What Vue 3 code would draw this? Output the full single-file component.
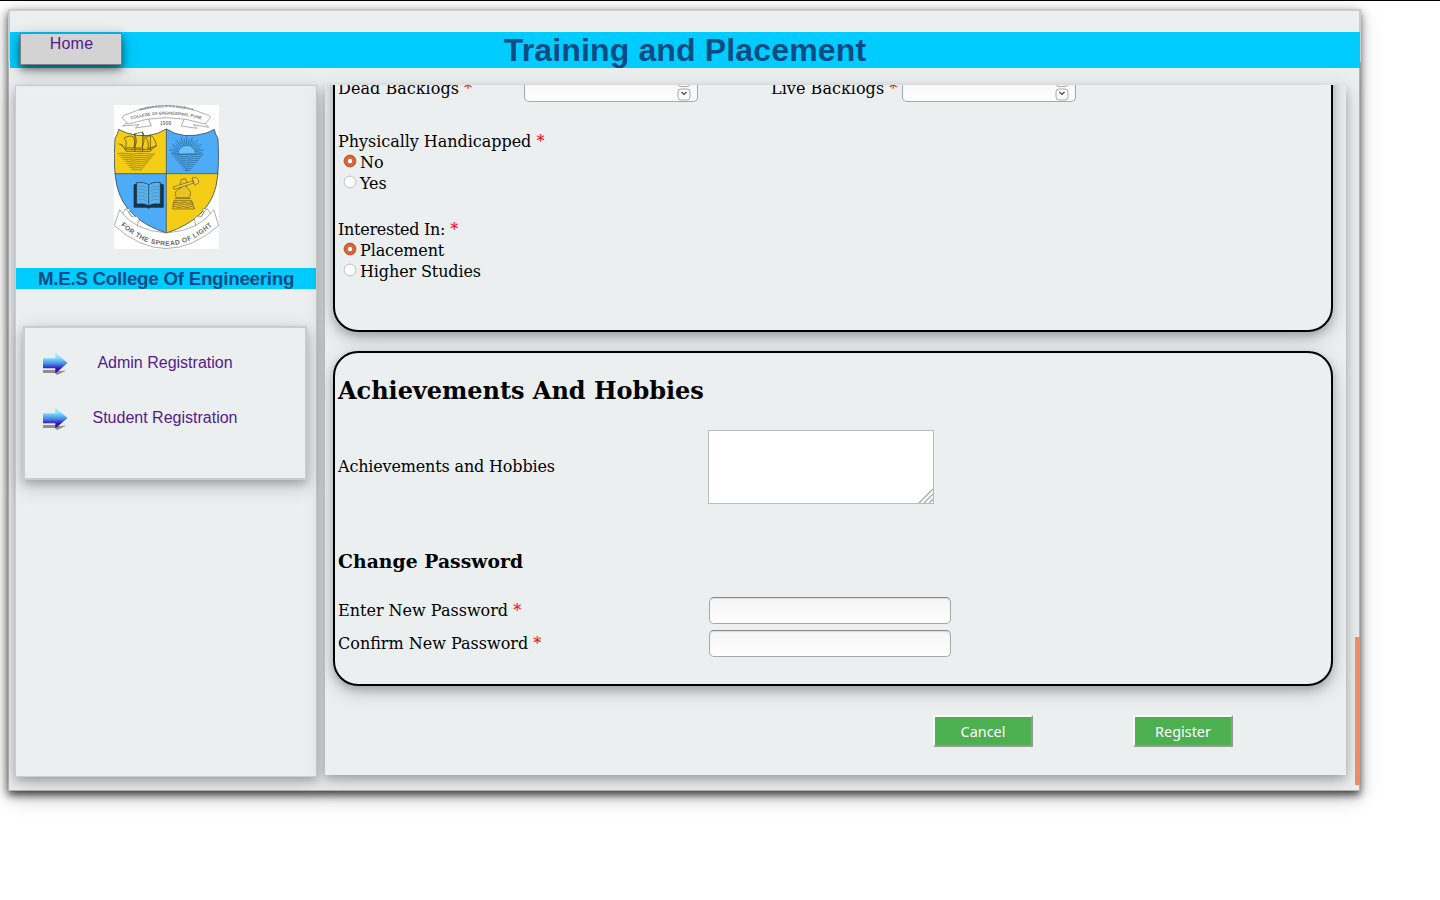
<script setup>
const links = ['Admin Registration', 'Student Registration']
const groups = [
  { label: 'Physically Handicapped', name: 'handicap', options: ['No', 'Yes'] },
  { label: 'Interested In:', name: 'interest', options: ['Placement', 'Higher Studies'] },
]
const backlogs = ['Dead Backlogs', 'Live Backlogs']
const passwords = ['Enter New Password', 'Confirm New Password']
const shield = 'M38 94 Q50 100 62 105 Q130 126 181 93 Q232 126 301 105 Q314 100 325 94 Q326 105 336 122 Q341 215 330 265 Q305 365 181 405 Q57 365 33 265 Q21 215 27 122 Q37 105 38 94Z'
const rays = Array.from({ length: 19 }, (_, i) => {
  const a = Math.PI * (i + 0.5) / 19
  const r = i % 2 ? 53 : 46
  return { x1: 242 + 28 * Math.cos(a), y1: 168 - 28 * Math.sin(a), x2: 242 + r * Math.cos(a), y2: 168 - r * Math.sin(a) }
})
const waves = Array.from({ length: 9 }, (_, i) => ({ y: 167 + i * 6, half: 48 - i * 5 }))
</script>

<template>
  <div class="page">
    <div class="frame">
      <header class="top">
        <div class="banner">
          <div class="home"><a>Home</a></div>
          <h1>Training and Placement</h1>
        </div>
      </header>
      <div class="body">
        <aside class="side">
          <svg class="crest" viewBox="24 21 315 432">
            <rect x="24" y="21" width="315" height="432" fill="#fff" />
            <g fill="#fff" stroke="#777" stroke-width="1.8">
              <path d="M67 72 L50 84 99 80 88 90 136 83 126 60 M294 72 L308 88 262 80 273 91 226 84 236 60" />
              <path d="M61 50 Q46 54 50 60 L66 78 Q180 40 297 78 L311 62 Q318 54 301 50 Q180 -4 61 50 Z" />
            </g>
            <defs>
              <path id="arcTop" d="M64 51 Q180 5 299 51" />
              <path id="arcMid" d="M60 69 Q180 30 302 69" />
              <path id="arcLow" d="M42 380 Q180 506 322 380" />
              <clipPath id="shield"><path :d="shield" /></clipPath>
            </defs>
            <text class="motto small"><textPath href="#arcTop" startOffset="50%" text-anchor="middle">MODERN EDUCATION SOCIETY'S</textPath></text>
            <text class="motto"><textPath href="#arcMid" startOffset="50%" text-anchor="middle">COLLEGE OF ENGINEERING, PUNE</textPath></text>
            <text x="179" y="82" text-anchor="middle" class="year">1999</text>
            <g clip-path="url(#shield)">
              <rect x="20" y="85" width="161" height="142" fill="#f4cd16" />
              <rect x="181" y="85" width="165" height="142" fill="#4dabf7" />
              <rect x="20" y="227" width="161" height="190" fill="#4dabf7" />
              <rect x="181" y="227" width="165" height="190" fill="#f4cd16" />
            </g>
            <path :d="shield" fill="none" stroke="#26343c" stroke-width="2.2" />
            <path d="M181 93 V405 M26 227 H337" fill="none" stroke="#26343c" stroke-width="2" />
            <g fill="none" stroke="#423d16" stroke-width="2">
              <path d="M46 137 L61 160 H133 L149 142 M52 145 L38 137 M87 160 V105 M110 160 V100 M133 156 V112 M54 120 Q72 111 81 116 Q91 133 82 151 Q70 145 57 151 Q66 134 54 120Z M84 109 Q105 101 112 105 Q119 133 105 151 L85 149 Q98 127 84 109Z M118 117 L135 112 Q150 125 151 145 L125 151 Q131 135 118 117Z M58 154 H137" />
              <path v-for="w in waves" :key="'a' + w.y" :d="`M${93 - w.half - 10} ${w.y} q6 -3 ${(w.half + 8) / 2} 0 t${(w.half + 8) / 2} 0 t${(w.half + 8) / 2} 0 t${(w.half + 8) / 2} 0`" stroke="#7b6a12" />
            </g>
            <g fill="none" stroke="#205879" stroke-width="1.8">
              <line v-for="(r, i) in rays" :key="i" v-bind="r" />
              <path d="M216 168 A26 26 0 0 1 268 168Z" fill="#6bc1fa" />
              <path v-for="w in waves" :key="'b' + w.y" :d="`M${244 - w.half} ${w.y + 2} q6 -3 ${w.half / 2} 0 t${w.half / 2} 0 t${w.half / 2} 0 t${w.half / 2} 0`" />
            </g>
            <g stroke="#102836" stroke-width="2">
              <path d="M84 260 L92 258 V318 H163 V258 L172 260 V328 H134 L128 331 122 328 H84Z" fill="#14394f" />
              <path d="M92 254 Q116 250 128 261 Q140 250 163 254 V318 Q141 315 128 323 Q115 315 92 318Z M128 261 V323" fill="#5cb1ed" />
              <path d="M98 265 Q113 262 122 270 M98 274 Q113 271 122 279 M98 284 Q113 281 122 289 M98 294 Q113 291 122 299 M98 304 Q113 301 122 309 M158 265 Q143 262 134 270 M158 274 Q143 271 134 279 M158 284 Q143 281 134 289 M158 294 Q143 291 134 299 M158 304 Q143 301 134 309" fill="none" stroke="#3680ad" stroke-width="1.5" />
            </g>
            <g fill="none" stroke="#5e4c12" stroke-width="1.8">
              <path d="M211 299 Q200 278 226 270 L222 257 226 244 238 242 245 255 241 268 Q261 280 250 299Z M205 302 H254 M203 308 H257 L266 333 H200Z" fill="#e8c322" />
              <path d="M201 267 L204 274 264 255 262 248Z M258 240 L270 238 Q280 244 278 254 L267 262 261 252Z" fill="#f0d145" />
              <path d="M204 314 q6 -4 12 0 t12 0 t12 0 t12 0 t9 0 M202 320 q6 -4 12 0 t12 0 t12 0 t12 0 t11 0 M201 327 q6 -4 12 0 t12 0 t12 0 t12 0 t13 0" />
            </g>
            <g fill="#fff" stroke="#777" stroke-width="1.8">
              <path d="M48 350 L58 333 73 332 68 345 78 357 92 355 99 364 93 386 70 378Z M316 350 L304 333 289 332 294 345 285 357 271 355 265 364 270 386 294 378Z M58 333 Q68 338 78 357 M304 333 Q294 338 285 357" />
              <path d="M41 335 Q80 397 181 405 Q282 397 323 335 L338 383 Q180 520 25 383Z" />
            </g>
            <text class="scroll"><textPath href="#arcLow" startOffset="50%" text-anchor="middle">FOR THE SPREAD OF LIGHT</textPath></text>
          </svg>
          <h3 class="college">M.E.S College Of Engineering</h3>
          <nav class="links">
            <div v-for="l in links" :key="l" class="link">
              <svg class="arrow" viewBox="0 0 28 26">
                <defs>
                  <linearGradient id="arrowFill" x1="0" y1="0" x2="0" y2="1">
                    <stop offset="0" stop-color="#9ffcff" /><stop offset=".25" stop-color="#7fe6ff" />
                    <stop offset=".55" stop-color="#4587e0" /><stop offset=".76" stop-color="#3a10c4" /><stop offset="1" stop-color="#4c00a8" />
                  </linearGradient>
                  <filter id="soft"><feGaussianBlur stdDeviation=".6" /></filter>
                </defs>
                <path d="M1 19 H14 L18 20 24.5 19.5 15 24 13 22 H1Z" fill="#777" opacity=".8" filter="url(#soft)" />
                <path d="M1 7.3 H13.3 V1.5 L25.5 12 13.3 22.5 V17.3 H1Z" fill="url(#arrowFill)" />
              </svg>
              <a>{{ l }}</a>
            </div>
          </nav>
        </aside>
        <main class="main">
          <section class="card first">
            <div class="backlogs">
              <div v-for="b in backlogs" :key="b" class="backlog">
                <label>{{ b }} <i>*</i></label>
                <div class="field spin">
                  <svg viewBox="0 0 14 27">
                    <g fill="#fcfcfc" stroke="#aaa"><rect x="1" y="1.5" width="12" height="10" rx="3" /><rect x="1" y="14" width="12" height="11" rx="3" /></g>
                    <path d="M4.5 17 L7 19.5 9.5 17" fill="none" stroke="#444" stroke-width="1.2" />
                  </svg>
                </div>
              </div>
            </div>
            <div v-for="g in groups" :key="g.name" class="group" :class="g.name">
              <div><span class="caption">{{ g.label }}</span> <i>*</i></div>
              <div v-for="(o, k) in g.options" :key="o" class="option">
                <svg class="radio" viewBox="0 0 14 14">
                  <circle cx="7" cy="7" r="5.9" :fill="k === 0 ? '#db6435' : '#fff'" :stroke="k === 0 ? '#b9532c' : '#c0c0c0'" />
                  <circle v-if="k === 0" cx="7" cy="7" r="2.2" fill="#fff" />
                </svg>{{ o }}
              </div>
            </div>
          </section>
          <section class="card second">
            <h2>Achievements And Hobbies</h2>
            <div class="row hobby">
              <label>Achievements and Hobbies</label>
              <div class="area">
                <svg viewBox="0 0 15 15"><path d="M1 15 L15 1 M6 15 L15 6 M11 15 L15 11" stroke="#aaa" stroke-width="1.4" /></svg>
              </div>
            </div>
            <h3>Change Password</h3>
            <div v-for="p in passwords" :key="p" class="row pass">
              <label>{{ p }} <i>*</i></label>
              <div class="field wide"></div>
            </div>
          </section>
          <div class="actions">
            <button>Cancel</button>
            <button>Register</button>
          </div>
        </main>
      </div>
      <div class="thumb"></div>
    </div>
  </div>
</template>

<style>
body { background: #fff; overflow: hidden; }
</style>

<style scoped>
* { box-sizing: border-box; }
.page { height: 900px; border-top: 1px solid #000; padding: 8px; font: 16px/21px "DejaVu Serif", serif; color: #000; }
.frame { position: relative; width: 1352px; height: 782px; background: #ebeff0; border: 1px solid #b3b3b3; box-shadow: 0 4px 8px rgba(0,0,0,.7), 0 6px 20px rgba(0,0,0,.22); }
.top { height: 53px; margin: -1px -2px 0 -1px; padding-top: 21px; border: 2px solid #ccc; border-bottom: 0; }
.banner { height: 36px; width: 1350px; background: #0cf; display: flex; position: relative; }
.banner h1 { margin: 0; flex: 1; text-align: center; font: bold 32px/36px "Liberation Sans", sans-serif; letter-spacing: .15px; color: #0b4c84; }
.home { position: absolute; left: 10px; top: 1px; width: 102px; height: 32px; padding-left: 1px; background: #d3d3d3; border: 1px solid #808080; text-align: center; font: 16px/20px "Liberation Sans", sans-serif; letter-spacing: .2px; color: #551a8b; box-shadow: 0 4px 8px rgba(0,0,0,.55), 0 6px 20px rgba(0,0,0,.19); }
.body { display: flex; align-items: flex-start; gap: 8px; padding: 23px 6px 0; }
.side, .main, .card, .links { box-shadow: 0 4px 8px rgba(0,0,0,.2), 0 6px 20px rgba(0,0,0,.19); }
.side { width: 302px; flex: none; height: 692px; border: 1px solid #ccc; background: #ebeff0; padding-top: 19px; display: flex; flex-direction: column; align-items: center; }
.crest { width: 105px; height: 144px; display: block; }
.motto { font: bold 12.5px "Liberation Sans", sans-serif; fill: #777; }
.small { font-size: 10px; }
.year { font: 15px "Liberation Sans", sans-serif; fill: #555; }
.scroll { font: bold 20px "Liberation Sans", sans-serif; fill: #666; letter-spacing: 1.4px; }
.college { align-self: stretch; margin: 19px 0 37px; height: 21px; background: #0cf; text-align: center; font: bold 18.72px/21px "Liberation Sans", sans-serif; letter-spacing: -.24px; color: #0b4c84; }
.links { width: 284px; height: 154px; margin-right: 2px; background: #ebeff0; border: 2px solid #ccc; padding-top: 8px; }
.link { height: 55px; display: flex; align-items: center; padding-left: 17px; font: 16px/18px "Liberation Sans", sans-serif; color: #551a8b; }
.link a { width: 168px; text-align: center; margin: -2px 0 0 11px; }
.arrow { width: 28px; height: 26px; }
.main { width: 1021px; flex: none; height: 690px; background: #ebeff0; overflow: hidden; padding: 0 13px 0 8px; }
i { color: red; font-style: normal; }
.card { border: 2px solid #000; border-radius: 25px; background: #ebeff0; padding-left: 3px; }
.first { margin-top: -40px; height: 287px; padding-top: 28px; }
.backlogs { display: flex; height: 27px; margin-bottom: 29px; }
.backlog { display: flex; width: 433px; line-height: 28px; }
.backlog label { width: 186px; letter-spacing: .05px; }
.backlog + .backlog { width: auto; }
.backlog + .backlog label { width: 131px; }
.field { background: linear-gradient(#f4f4f4, #fff); border: 1px solid #a8a8a8; border-top-color: #888; border-radius: 5px; box-shadow: inset 0 1px 1px #ddd; }
.spin { width: 174px; height: 27px; display: flex; justify-content: flex-end; padding-right: 6px; }
.spin svg { width: 14px; height: 27px; margin-top: -1px; }
.group { height: 88px; }
.caption { letter-spacing: -.04px; }
.interest .caption { letter-spacing: -.28px; }
.option { display: flex; padding-left: 5px; letter-spacing: -.12px; }
.radio { width: 14px; height: 14px; margin: 2px 3px 0 0; }
.second { margin-top: 19px; height: 335px; padding-top: 24px; }
h2 { margin: 0 0 25px; font: bold 24px/28px "DejaVu Serif", serif; letter-spacing: -.04px; }
.row { display: flex; align-items: center; }
.row label { width: 371px; }
.hobby { height: 74px; }
.hobby label { width: 370px; margin-top: -2px; letter-spacing: -.16px; }
.area { width: 226px; height: 74px; background: #fff; border: 1px solid #bdbbb9; display: flex; align-items: flex-end; justify-content: flex-end; }
.area svg { width: 15px; height: 15px; }
.second h3 { margin: 46px 0 24px; font: bold 18.72px/23px "DejaVu Serif", serif; letter-spacing: .08px; }
.wide { width: 242px; height: 27px; }
.pass { height: 27px; margin-bottom: 6px; }
.actions { display: flex; gap: 100px; padding: 29px 0 0 600px; }
button { width: 100px; height: 32px; padding: 1px 0 0; background: #4caf50; border: 2px solid; border-color: #fafafa #999 #999 #fafafa; color: #fff; font: 14.4px/20px "Noto Sans", sans-serif; }
.thumb { position: absolute; left: 1346px; top: 627px; width: 5px; height: 148px; background: #f08c64; }
</style>
